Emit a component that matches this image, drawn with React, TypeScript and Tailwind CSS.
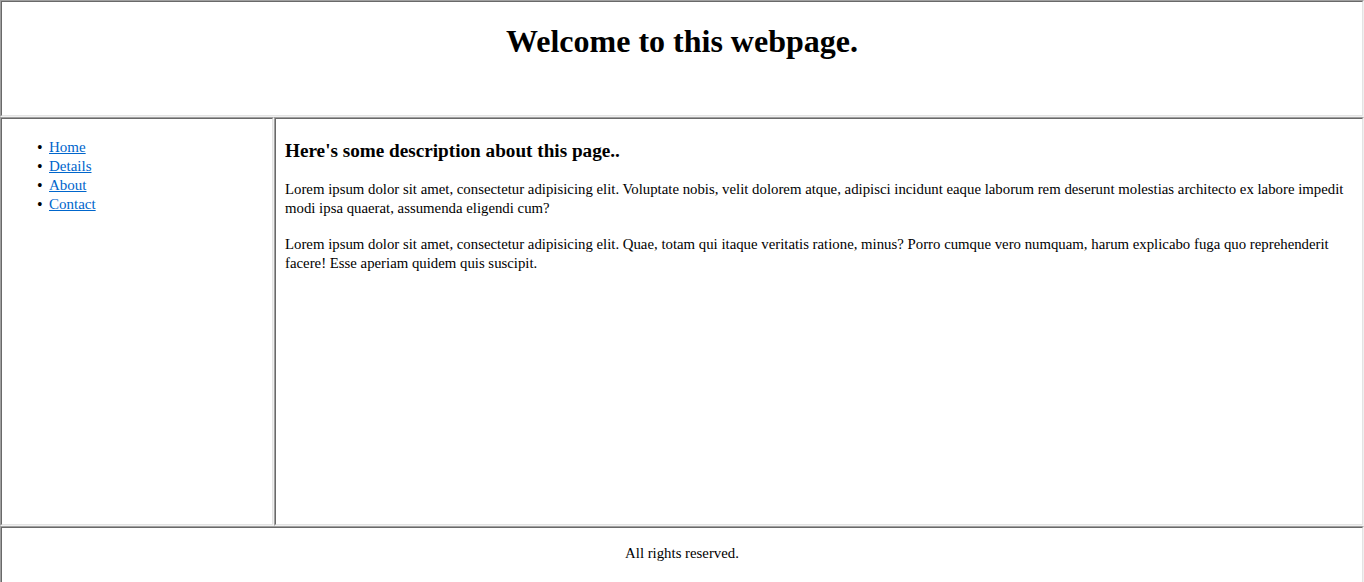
import React from "react";

// old-school frameset page: header / nav + content / footer
const Frame = ({ className = "", children }: { className?: string; children?: React.ReactNode }) => (
  <div
    className={`border-t border-l border-r border-b border-t-[#a0a0a0] border-l-[#a0a0a0] border-r-[#f0f0f0] border-b-[#f0f0f0] ${className}`}
  >
    <div className="h-full border-t border-l border-r border-b border-t-[#696969] border-l-[#696969] border-r-[#e3e3e3] border-b-[#e3e3e3] bg-white overflow-hidden">
      {children}
    </div>
  </div>
);

const links = ["Home", "Details", "About", "Contact"];

export default function App() {
  return (
    <div
      className="w-[1364px] h-[582px] overflow-hidden flex flex-col bg-[#f0f0f0] text-black"
      style={{ fontFamily: '"Liberation Serif", "Times New Roman", serif' }}
    >
      <Frame className="h-[117px] shrink-0">
        <h1 className="pt-[21px] text-center text-[32px] leading-[37px] font-bold">Welcome to this webpage.</h1>
      </Frame>

      <div className="h-[409px] shrink-0 flex">
        <Frame className="w-[274px] shrink-0">
          <ul className="pt-[19px] pl-[35px] text-[15px] leading-[19px]">
            {links.map((l) => (
              <li key={l} className="flex">
                <span className="w-[12px] shrink-0 text-[16px]">•</span>
                <a href="#" className="text-[#0066cc] underline">
                  {l}
                </a>
              </li>
            ))}
          </ul>
        </Frame>

        <Frame className="flex-1">
          <div className="pl-[9px] pr-[8px] pt-[21px] text-[14.8px] leading-[19px]">
            <h3 className="text-[19.2px] leading-[22px] font-bold">Here's some description about this page..</h3>
            <p className="mt-[18px]">
              Lorem ipsum dolor sit amet, consectetur adipisicing elit. Voluptate nobis, velit dolorem atque, adipisci
              incidunt eaque laborum rem deserunt molestias architecto ex labore impedit modi ipsa quaerat, assumenda
              eligendi cum?
            </p>
            <p className="mt-[17px]">
              Lorem ipsum dolor sit amet, consectetur adipisicing elit. Quae, totam qui itaque veritatis ratione, minus?
              Porro cumque vero numquam, harum explicabo fuga quo reprehenderit facere! Esse aperiam quidem quis
              suscipit.
            </p>
          </div>
        </Frame>
      </div>

      <Frame className="h-[60px] shrink-0">
        <p className="pt-[16px] text-center text-[14.8px] leading-[19px]">All rights reserved.</p>
      </Frame>
    </div>
  );
}
